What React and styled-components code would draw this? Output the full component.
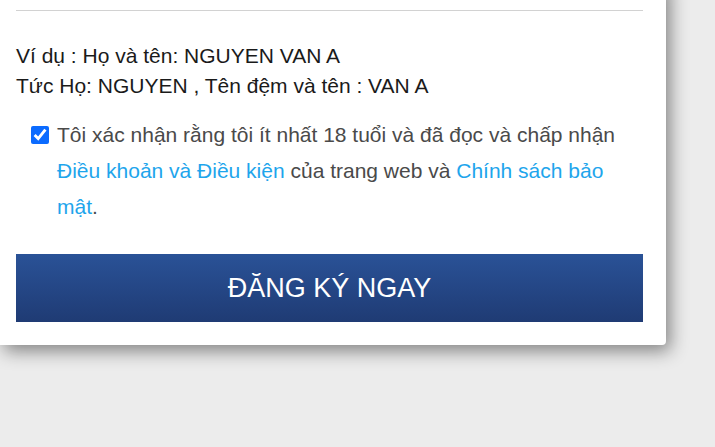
import React from 'react';
import styled, { createGlobalStyle } from 'styled-components';

const GlobalStyle = createGlobalStyle`
  html, body {
    margin: 0;
    padding: 0;
    background: #ececec;
    font-family: "Liberation Sans", Arial, sans-serif;
  }
  body {
    min-height: 447px;
    overflow: hidden;
  }
`;

const Card = styled.div`
  width: 627px;
  margin-top: -20px;
  padding: 30px 23px 23px 16px;
  background: #fff;
  border-radius: 0 0 4px 0;
  box-shadow: 4px 6px 18px rgba(0, 0, 0, 0.45);
`;

const Divider = styled.hr`
  margin: 0;
  border: 0;
  border-top: 1px solid #d2d2d2;
`;

const Example = styled.div`
  margin-top: 30px;
  font-size: 21px;
  line-height: 30px;
  color: #1a1a1a;
`;

const ConsentRow = styled.label`
  display: flex;
  align-items: flex-start;
  margin-top: 16px;
  padding-left: 15px;
  font-size: 21px;
  line-height: 36px;
  color: #4a4a4a;
`;

const Check = styled.input`
  flex: none;
  width: 18px;
  height: 18px;
  margin: 9px 8px 0 0;
  accent-color: #0b6bff;
`;

const Link = styled.a`
  color: #1ea5ec;
  text-decoration: none;
`;

const SubmitButton = styled.button`
  display: block;
  width: 100%;
  height: 68px;
  margin-top: 29px;
  border: 0;
  background: linear-gradient(to bottom, #2a5297, #1f3b74);
  color: #fff;
  font-family: "Liberation Sans", Arial, sans-serif;
  font-size: 27px;
  cursor: pointer;
`;

export default function App() {
  return (
    <>
      <GlobalStyle />
      <Card>
        <Divider />
        <Example>
          Ví dụ : Họ và tên: NGUYEN VAN A
          <br />
          Tức Họ: NGUYEN , Tên đệm và tên : VAN A
        </Example>
        <ConsentRow>
          <Check type="checkbox" defaultChecked />
          <span>
            Tôi xác nhận rằng tôi ít nhất 18 tuổi và đã đọc và chấp nhận{' '}
            <Link href="#">Điều khoản và Điều kiện</Link> của trang web và{' '}
            <Link href="#">Chính sách bảo mật</Link>.
          </span>
        </ConsentRow>
        <SubmitButton type="button">ĐĂNG KÝ NGAY</SubmitButton>
      </Card>
    </>
  );
}
